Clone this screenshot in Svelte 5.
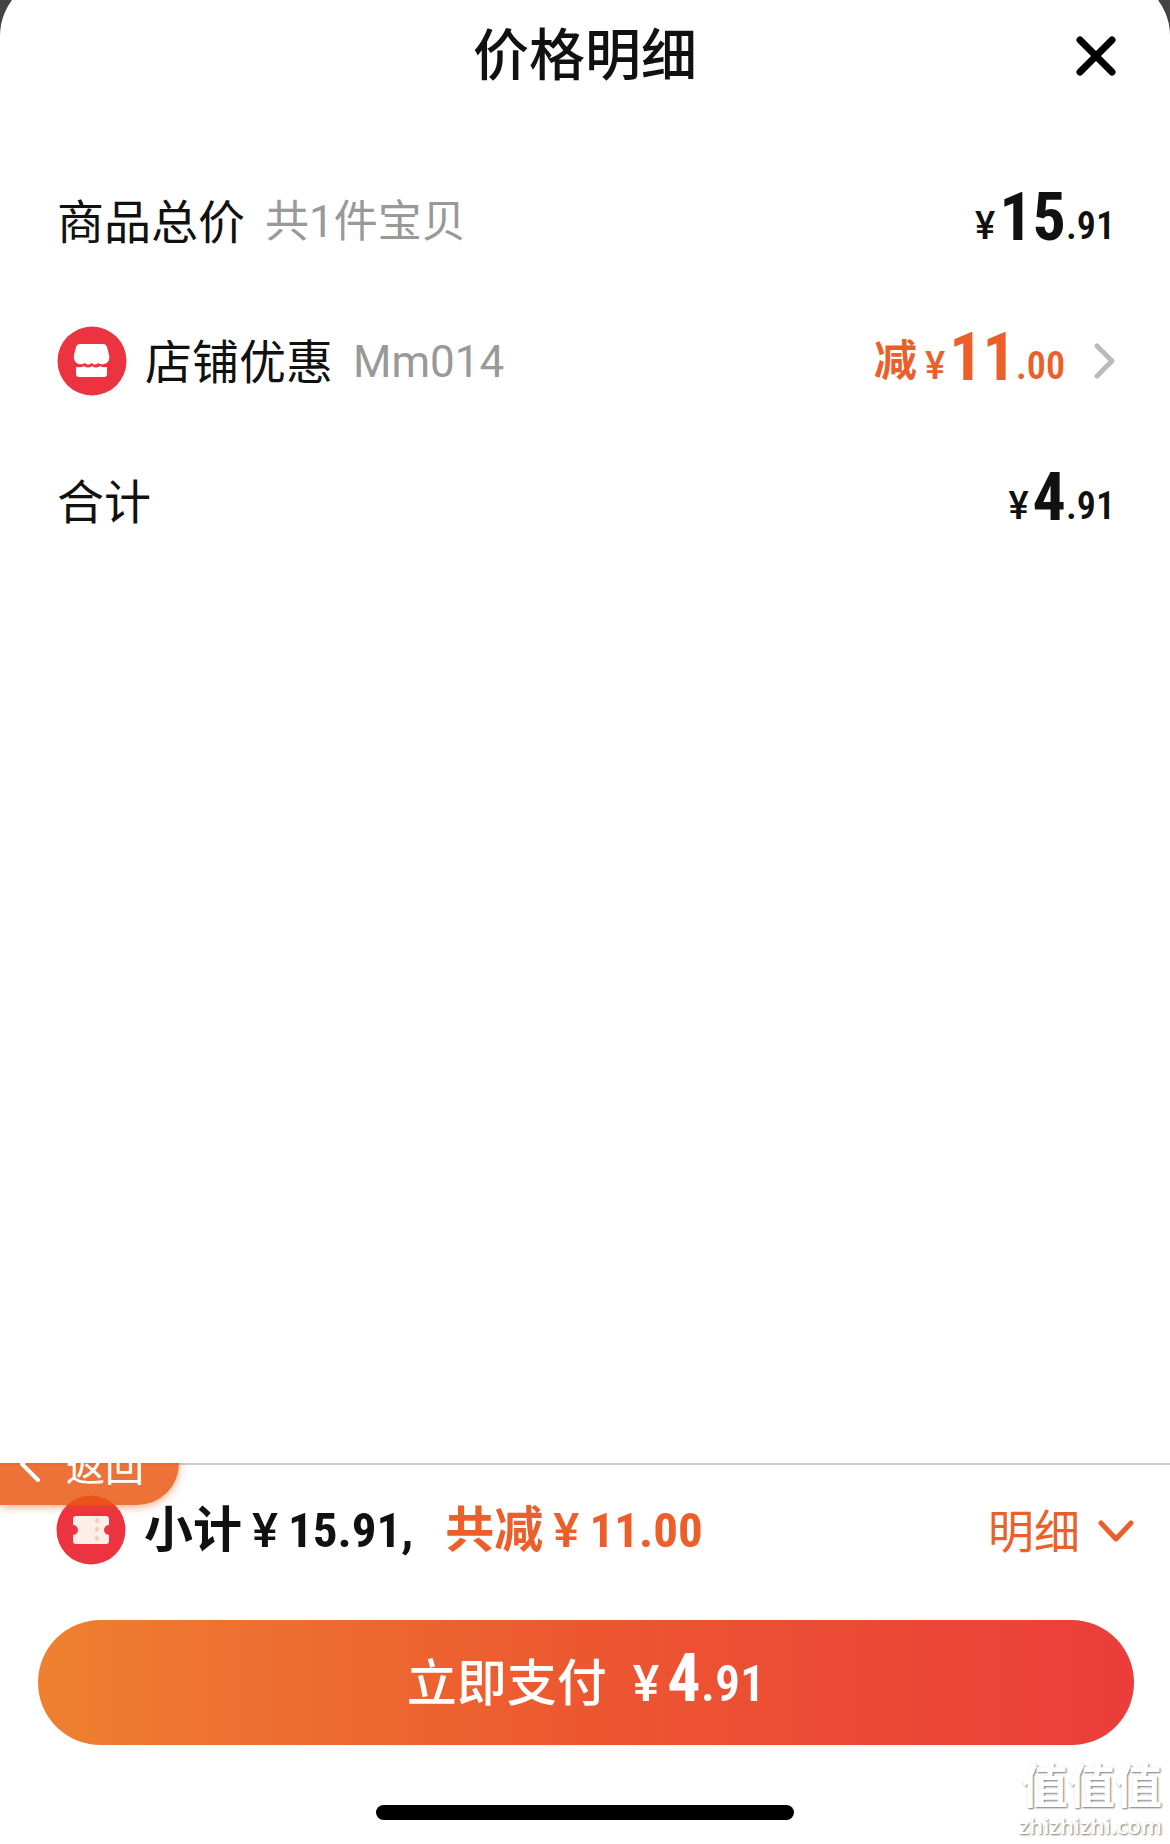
<script lang="ts">
  type Price = { whole: string; cents: string };

  type Row = {
    label: string;
    note?: string;
    shop?: boolean;
    discount?: boolean;
    price: Price;
  };

  const rows: Row[] = [
    {
      label: "商品总价",
      note: "共1件宝贝",
      price: { whole: "15", cents: ".91" },
    },
    {
      label: "店铺优惠",
      note: "Mm014",
      shop: true,
      discount: true,
      price: { whole: "11", cents: ".00" },
    },
    { label: "合计", price: { whole: "4", cents: ".91" } },
  ];

  const subtotal = "15.91";
  const saved = "11.00";
  const total: Price = { whole: "4", cents: ".91" };
</script>

{#snippet amount(price: Price)}
  <span class="amount">
    <span class="yen">¥</span>
    <span class="whole">{price.whole}</span>
    <span class="cents">{price.cents}</span>
  </span>
{/snippet}

<div class="page">
  <section class="sheet">
    <header>
      <h1>价格明细</h1>
      <button type="button" class="close" aria-label="关闭">
        <svg width="40" height="40" viewBox="0 0 40 40">
          <path d="M4 4 36 36M36 4 4 36" />
        </svg>
      </button>
    </header>

    <ul class="rows">
      {#each rows as row}
        <li class="row">
          {#if row.shop}
            <svg class="badge" width="70" height="70" viewBox="0 0 70 70">
              <circle cx="35" cy="35" r="34.5" fill="#ec3340" />
              <path
                fill="#fff"
                d="M23 18h23q3 0 4 3l2 8c1 5-1 8-4.500 9q-4 1-6.500-1-3 3-6.500 0-3.500 3-6.500 0-3 2-6.500 1C18.500 37 16 33 17 29l2-8q1-3 4-3Z"
              />
              <path
                fill="#fff"
                d="M19 41q5 1 8-1 4 3 8 0 4 3 8 0 3 2 7 1v7q0 3-3 3H22q-3 0-3-3Z"
              />
            </svg>
          {/if}
          <span class="label">{row.label}</span>
          {#if row.note}<span class="note">{row.note}</span>{/if}

          <span class="value" class:discount={row.discount}>
            {#if row.discount}<span class="minus">减</span>{/if}
            {@render amount(row.price)}
          </span>
          {#if row.discount}
            <svg class="more" width="22" height="36" viewBox="0 0 22 36">
              <path d="M4 3 19 18 4 33" />
            </svg>
          {/if}
        </li>
      {/each}
    </ul>

    <footer>
      <button type="button" class="back">
        <svg width="20" height="36" viewBox="0 0 20 36">
          <path d="M18 2 2 18 18 34" />
        </svg>
        返回
      </button>

      <div class="summary">
        <svg class="badge" width="70" height="70" viewBox="0 0 70 70">
          <circle cx="35" cy="35" r="34.5" fill="#ec3340" />
          <path
            fill="#fdeee8"
            d="M20 21h30q3 0 3 3v6a5 5 0 0 0 0 10v6q0 3-3 3H20q-3 0-3-3v-6a5 5 0 0 0 0-10v-6q0-3 3-3Z"
          />
          <path
            d="M41 25v1m0 8v1m0 8v1"
            stroke="#f4cdbd"
            stroke-width="4"
            stroke-linecap="round"
          />
        </svg>
        <span class="sum">
          <span>小计</span>
          <span class="yen">¥</span>
          <span class="number">{subtotal},</span>
        </span>
        <span class="sum saved">
          <span>共减</span>
          <span class="yen">¥</span>
          <span class="number">{saved}</span>
        </span>
        <button type="button" class="detail">
          明细
          <svg width="36" height="24" viewBox="0 0 36 24">
            <path d="M3 3 18 19 33 3" />
          </svg>
        </button>
      </div>

      <button type="button" class="pay">
        <span>立即支付</span>
        {@render amount(total)}
      </button>

      <div class="home-bar"></div>

      <div class="watermark">
        <span class="mark">值值值</span>
        <span class="site">zhizhizhi.com</span>
      </div>
    </footer>
  </section>
</div>

<style>
  :global(body) {
    background: #444;
  }

  .page {
    display: flex;
    min-height: 100vh;
    overflow: hidden;
    color: #111;
    font-family: Roboto, "Noto Sans CJK SC", sans-serif;
  }

  .sheet {
    flex: 1;
    display: flex;
    flex-direction: column;
    margin-top: -24px;
    padding-top: 24px;
    background: #fff;
    border-radius: 60px 60px 0 0;
  }

  button {
    padding: 0;
    border: none;
    background: none;
    color: inherit;
    font-family: inherit;
    cursor: pointer;
  }

  svg {
    flex: none;
    display: block;
  }

  header {
    display: grid;
    grid-template-columns: 1fr auto 1fr;
    align-items: center;
    height: 112px;
    padding: 0 54px;
  }

  h1 {
    grid-column: 2;
    margin: 0;
    font-size: 56px;
    line-height: 64px;
    font-weight: 500;
  }

  .close {
    justify-self: end;
  }

  .close path {
    stroke: #000;
    stroke-width: 7;
    stroke-linecap: round;
  }

  .rows {
    flex: 1;
    margin: 0;
    padding: 39px 55px 0 57px;
    list-style: none;
  }

  .row {
    display: flex;
    align-items: center;
    height: 140px;
  }

  .badge {
    margin-right: 18px;
  }

  .label {
    padding-top: 4px;
    font-size: 47px;
    line-height: 56px;
  }

  .note {
    margin-left: 20px;
    padding-top: 2px;
    color: #999;
    font-size: 44px;
    line-height: 56px;
  }

  .value {
    display: flex;
    align-items: center;
    gap: 8px;
    margin-left: auto;
    padding-bottom: 6px;
  }

  .discount {
    color: #ec5f2a;
  }

  .minus {
    padding-top: 6px;
    font-size: 43px;
    line-height: 56px;
    font-weight: 700;
  }

  .amount {
    display: flex;
    align-items: flex-end;
    font-family: "Roboto Condensed", Roboto, sans-serif;
    font-weight: 700;
  }

  .yen {
    font-family: Roboto, sans-serif;
    font-weight: 500;
  }

  .amount .yen {
    margin-right: 4px;
    font-size: 38px;
    line-height: 40px;
  }

  .whole {
    font-size: 66px;
    line-height: 56px;
  }

  .cents {
    font-size: 38px;
    line-height: 40px;
    font-weight: 600;
  }

  .more {
    margin-left: 28px;
  }

  .more path,
  .back path,
  .detail path {
    fill: none;
    stroke: #bbb;
    stroke-width: 5;
    stroke-linecap: round;
    stroke-linejoin: round;
  }

  footer {
    position: relative;
    display: flex;
    flex-direction: column;
    padding: 2px 36px 24px;
    overflow: hidden;
    box-shadow: inset 0 2px #ccc;
  }

  .back {
    position: absolute;
    top: -41px;
    left: 0;
    z-index: 1;
    display: flex;
    align-items: center;
    gap: 26px;
    height: 83px;
    padding: 0 35px 0 20px;
    border-radius: 0 42px 42px 0;
    background: rgba(233, 89, 20, 0.85);
    box-shadow: 0 2px 8px rgba(233, 89, 20, 0.5);
    color: #fff;
    font-size: 39px;
  }

  .back path {
    stroke: #fff;
    stroke-width: 4;
  }

  .summary {
    display: flex;
    align-items: center;
    height: 130px;
    padding-left: 20px;
  }

  .sum {
    display: flex;
    align-items: baseline;
    gap: 10px;
    padding-top: 2px;
    font-size: 49px;
    line-height: 56px;
    font-weight: 700;
  }

  .number {
    font-family: "Roboto Condensed", Roboto, sans-serif;
  }

  .saved {
    margin-left: 32px;
    color: #ec5f2a;
  }

  .detail {
    display: flex;
    align-items: center;
    gap: 18px;
    margin-left: auto;
    padding-top: 4px;
    color: #ec5f2a;
    font-size: 46px;
    line-height: 56px;
  }

  .detail path {
    stroke: #ec5f2a;
  }

  .pay {
    display: flex;
    justify-content: center;
    align-items: baseline;
    gap: 26px;
    height: 125px;
    margin: 25px 0 0 2px;
    border-radius: 63px;
    background: linear-gradient(90deg, #ee8030, #ec5730 50%, #eb3d3b);
    color: #fff;
    font-size: 50px;
    line-height: 129px;
    font-weight: 500;
  }

  .pay .amount {
    align-items: baseline;
  }

  .pay .yen,
  .pay .cents {
    font-size: 50px;
  }

  .pay .yen {
    margin-right: 8px;
  }

  .home-bar {
    width: 38%;
    height: 15px;
    margin: 60px auto 0;
    border-radius: 8px;
    background: #000;
  }

  .watermark {
    position: absolute;
    right: 8px;
    bottom: 6px;
    display: flex;
    flex-direction: column;
    align-items: flex-end;
    color: #fff;
    text-shadow: 1px 1px 2px #777;
  }

  .mark {
    font-size: 47px;
    line-height: 50px;
    font-weight: 700;
  }

  .site {
    font-family: "Open Sans", sans-serif;
    font-size: 22px;
    line-height: 26px;
    font-weight: 600;
  }
</style>
